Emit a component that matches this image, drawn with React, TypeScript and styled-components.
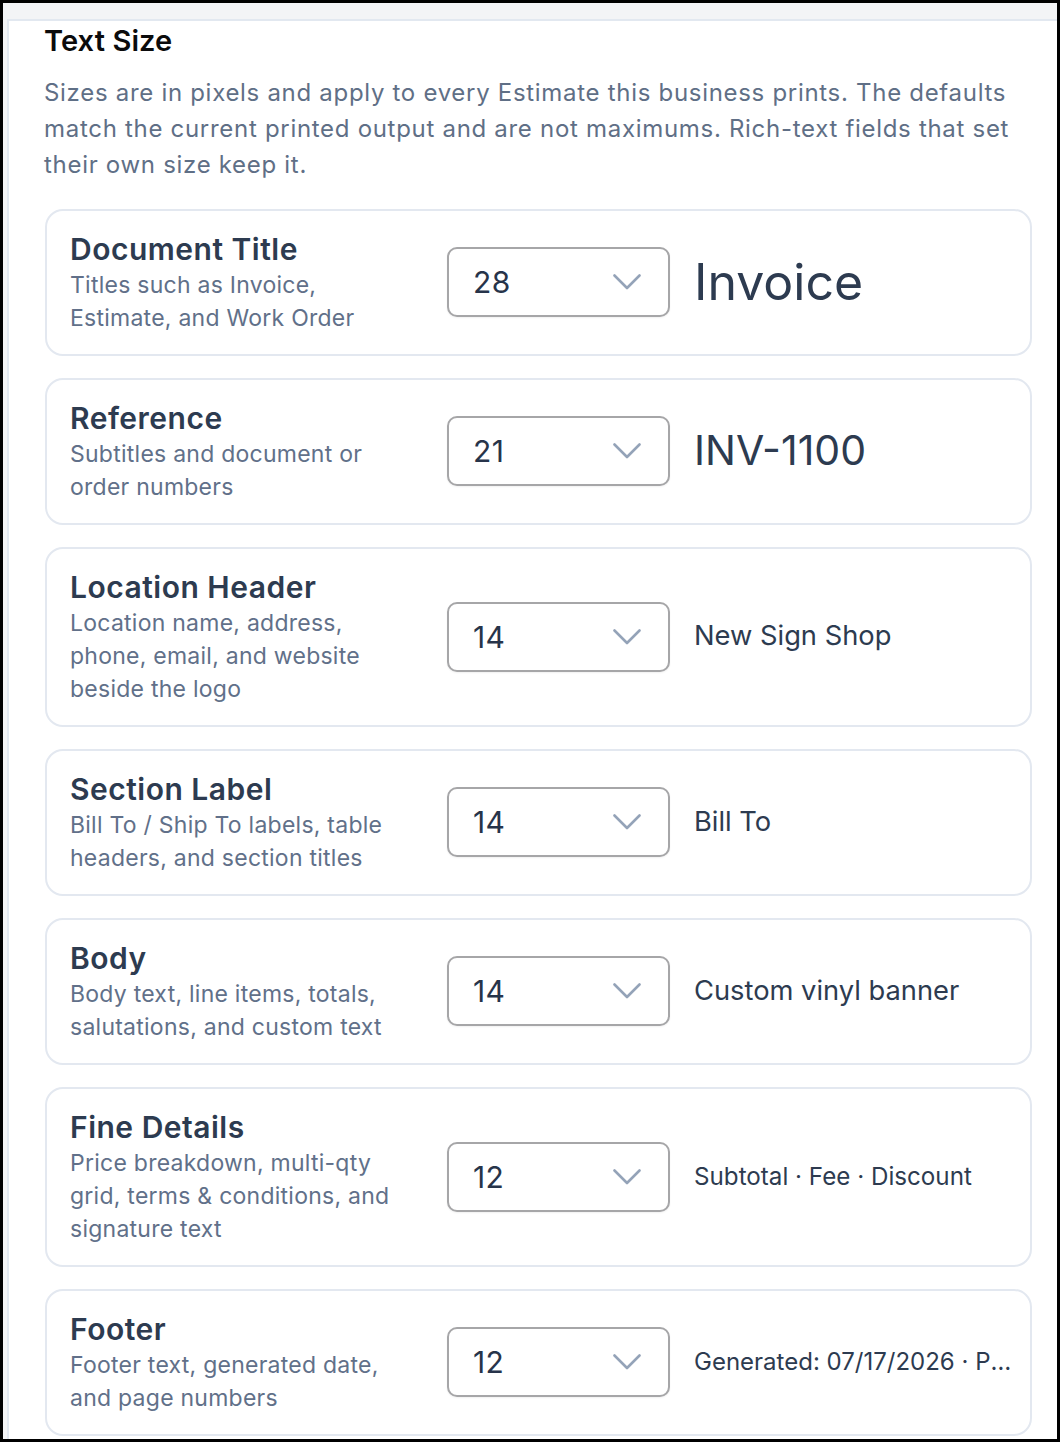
import React from "react";
import styled, { createGlobalStyle } from "styled-components";

const Global = createGlobalStyle`
  html, body { margin: 0; padding: 0; background: #000; }
  body { font-family: Inter, "Noto Sans", "Liberation Sans", sans-serif; -webkit-font-smoothing: antialiased; }
  * { box-sizing: border-box; }
`;

const Frame = styled.div`
  width: 1060px;
  height: 1442px;
  border: 3px solid #000;
  background: #f3f4f6;
  overflow: hidden;
  padding: 16px 0 0 4px;
`;

const Panel = styled.section`
  background: #fff;
  border-top: 2px solid #e2e8f0;
  border-left: 2px solid #e2e8f0;
  height: 100%;
  padding: 2px 25px 0 36px;
`;

const Heading = styled.h2`
  margin: 0 0 0 -1px;
  font-size: 29px;
  line-height: 36px;
  font-weight: 600;
  letter-spacing: 0.1px;
  color: #0b0b0c;
`;

const Intro = styled.p`
  margin: 16px 0 26px -1px;
  font-size: 24px;
  line-height: 36px;
  letter-spacing: 0.7px;
  color: #5f6f86;
`;

const List = styled.div`
  display: flex;
  flex-direction: column;
  gap: 22px;
`;

const Card = styled.div`
  display: grid;
  grid-template-columns: 353px 223px minmax(0, 1fr);
  column-gap: 24px;
  align-items: center;
  border: 2px solid #e3e8f0;
  border-radius: 18px;
  padding: 18px 23px 19px 23px;
`;

const Label = styled.div`
  display: flex;
  flex-direction: column;
`;

const Title = styled.div`
  font-size: 30px;
  line-height: 40px;
  font-weight: 600;
  letter-spacing: 0.5px;
  color: #2d3b50;
`;

const Desc = styled.div`
  max-width: 345px;
  font-size: 23px;
  line-height: 33px;
  letter-spacing: 0.25px;
  color: #617089;
`;

const Select = styled.div`
  height: 70px;
  border: 2px solid #a6a6a8;
  border-radius: 10px;
  display: flex;
  align-items: center;
  justify-content: space-between;
  padding: 0 27px 0 24px;
  font-size: 30px;
  letter-spacing: 0.4px;
  color: #27344a;
  box-shadow: 0 1px 2px rgba(0, 0, 0, 0.06);
  background: #fff;
`;

const Preview = styled.div<{ $size: number }>`
  font-size: ${(p) => p.$size}px;
  line-height: 1.2;
  color: #2d3b50;
  white-space: nowrap;
  overflow: hidden;
  text-overflow: ellipsis;
  margin-right: -10px;
`;

const Chevron = () => (
  <svg width="28" height="16" viewBox="0 0 28 16" fill="none">
    <polyline points="1.5,1.5 14,14 26.5,1.5" stroke="#94a3b8" strokeWidth="2.6" strokeLinecap="round" strokeLinejoin="round" />
  </svg>
);

const rows = [
  { title: "Document Title", desc: "Titles such as Invoice, Estimate, and Work Order", value: 28, size: 50, preview: "Invoice" },
  { title: "Reference", desc: "Subtitles and document or order numbers", value: 21, size: 41, preview: "INV-1100" },
  { title: "Location Header", desc: "Location name, address, phone, email, and website beside the logo", value: 14, size: 27.3, preview: "New Sign Shop" },
  { title: "Section Label", desc: "Bill To / Ship To labels, table headers, and section titles", value: 14, size: 27.3, preview: "Bill To" },
  { title: "Body", desc: "Body text, line items, totals, salutations, and custom text", value: 14, size: 27.3, preview: "Custom vinyl banner" },
  { title: "Fine Details", desc: "Price breakdown, multi-qty grid, terms & conditions, and signature text", value: 12, size: 24.2, preview: "Subtotal · Fee · Discount" },
  { title: "Footer", desc: "Footer text, generated date, and page numbers", value: 12, size: 24, preview: "Generated: 07/17/2026 · Page 1 of 1" },
];

export default function App() {
  return (
    <>
      <Global />
      <Frame>
        <Panel>
          <Heading>Text Size</Heading>
          <Intro>
            Sizes are in pixels and apply to every Estimate this business prints. The defaults match the current
            printed output and are not maximums. Rich-text fields that set their own size keep it.
          </Intro>
          <List>
            {rows.map((r) => (
              <Card key={r.title}>
                <Label>
                  <Title>{r.title}</Title>
                  <Desc>{r.desc}</Desc>
                </Label>
                <Select>
                  <span>{r.value}</span>
                  <Chevron />
                </Select>
                <Preview $size={r.size}>{r.preview}</Preview>
              </Card>
            ))}
          </List>
        </Panel>
      </Frame>
    </>
  );
}
